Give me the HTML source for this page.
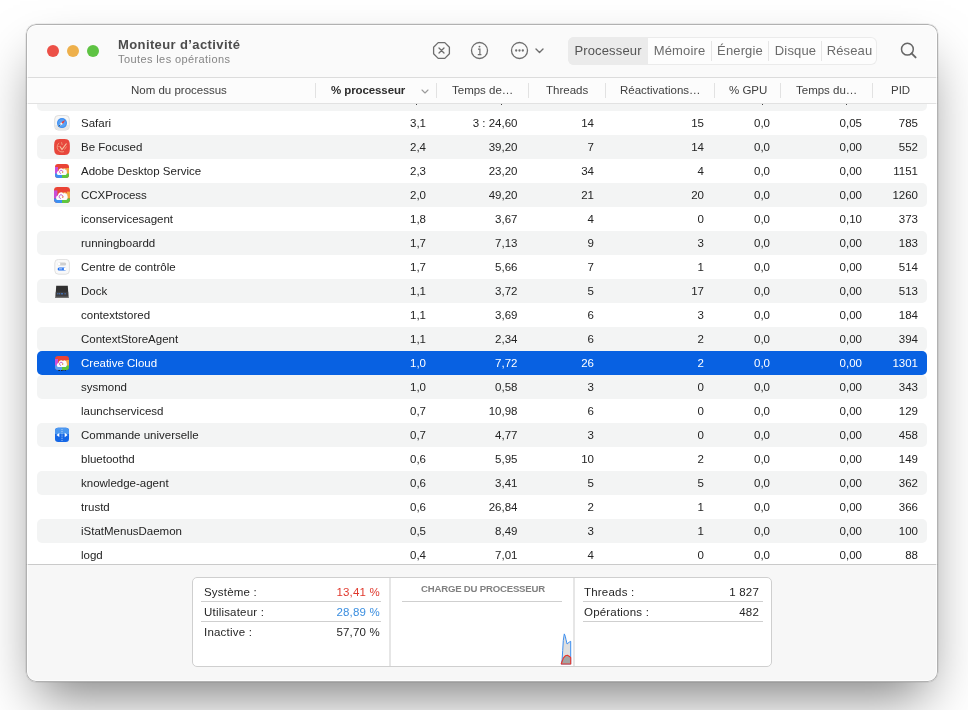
<!DOCTYPE html>
<html><head><meta charset="utf-8">
<style>
html,body{margin:0;padding:0;}
body{width:968px;height:710px;overflow:hidden;background:#fff;position:relative;font-family:"Liberation Sans",sans-serif;}
.win{will-change:transform;position:absolute;left:26px;top:24px;width:912px;height:658px;border-radius:10px;background:#f7f7f7;box-shadow:0 0 0 0.5px rgba(0,0,0,0.12),0 26px 50px -12px rgba(0,0,0,0.5);overflow:hidden;}
.wb{position:absolute;left:0;top:0;right:0;bottom:0;border-radius:10px;box-shadow:inset 0 0 0 1px rgba(0,0,0,0.3),inset 0 0 0 2px rgba(255,255,255,0.7);z-index:20;pointer-events:none;}
.title{position:absolute;left:0;top:0;width:912px;height:53px;background:#fafafa;border-bottom:1px solid #dcdcdc;z-index:3;}
.tl{position:absolute;top:21px;width:12px;height:12px;border-radius:50%;}
.ttl{position:absolute;left:92px;top:13px;font-size:13px;font-weight:bold;color:#4c4c4c;white-space:nowrap;letter-spacing:0.39px;}
.sub{position:absolute;left:92px;top:29px;font-size:11px;color:#858585;white-space:nowrap;letter-spacing:0.4px;}
.seg{position:absolute;left:542px;top:13px;width:309px;height:28px;border-radius:6px;background:#fdfdfd;box-shadow:inset 0 0 0 1px #ebebeb;overflow:hidden;}
.segi{position:absolute;top:0;height:28px;line-height:28px;font-size:13px;color:#6b6b6b;text-align:center;letter-spacing:0.15px;}
.segsep{position:absolute;top:4px;width:1px;height:20px;background:#e6e6e6;}
.hdr{position:absolute;left:0;top:54px;width:912px;height:25px;background:rgba(252,252,252,0.95);border-bottom:1px solid #e2e2e2;z-index:2;}
.hc{position:absolute;top:0;height:25px;line-height:25px;font-size:11.5px;color:#404040;white-space:nowrap;}
.hsep{position:absolute;top:5px;width:1px;height:15px;background:#e2e2e2;}
.table{position:absolute;left:0;top:54px;width:912px;height:486px;background:#fff;overflow:hidden;border-bottom:1px solid #cacaca;}
.row{position:absolute;left:11px;width:890px;height:24px;border-radius:5px;font-size:11.5px;color:#242424;}
.table .row{margin-top:-54px;}
.row.alt{background:#f3f4f4;}
.row.sel{background:#0861e2;color:#fff;}
.ic{position:absolute;left:17px;top:4px;width:16px;height:16px;}
.ic svg{display:block;}
.nm{position:absolute;left:44px;top:0;line-height:24px;white-space:nowrap;}
.c{position:absolute;top:0;line-height:24px;white-space:nowrap;text-align:right;}
.panel{position:absolute;left:166px;top:553px;width:578px;height:88px;background:#fff;border:1px solid #cfcfcf;border-radius:5px;}
.pl{position:absolute;font-size:11.5px;color:#262626;white-space:nowrap;letter-spacing:0.2px;}
.tb{position:absolute;left:0;top:0;width:912px;height:53px;z-index:4;}
.pline{position:absolute;height:1px;background:#cfcfcf;}
</style></head><body>
<div class="win"><div class="wb"></div>
 <div class="title">
  <div class="tl" style="left:21px;background:#ec5047;"></div>
  <div class="tl" style="left:41px;background:#eeb04b;"></div>
  <div class="tl" style="left:61px;background:#5ec343;"></div>
  <div class="ttl">Moniteur d’activité</div>
  <div class="sub">Toutes les opérations</div>
 </div>
 <div class="table">
 <div class="row alt" style="top:63px"></div><div style="position:absolute;left:390px;top:26px;width:1.4px;height:1.4px;background:#444;margin-top:0"></div><div style="position:absolute;left:475px;top:26px;width:1.4px;height:1.4px;background:#444;margin-top:0"></div><div style="position:absolute;left:736px;top:26px;width:1.4px;height:1.4px;background:#444;margin-top:0"></div><div style="position:absolute;left:820px;top:26px;width:1.4px;height:1.4px;background:#444;margin-top:0"></div>
 <div class="row" style="top:87px"><div class="ic"><svg width="16" height="16" viewBox="0 0 16 16"><rect x="0.7" y="0.5" width="14.6" height="14.6" rx="3.6" fill="#f7f7f7" stroke="#d2d2d2" stroke-width="0.7"/><path d="M1.2 10 H14.8 V11.5 Q14.8 14.8 11.5 14.8 H4.5 Q1.2 14.8 1.2 11.5Z" fill="#e6e6e6"/><circle cx="8" cy="8.1" r="5" fill="#3b8cf0"/><circle cx="8" cy="8.1" r="3.9" fill="#5aa2f5"/><path d="M11.2 4.9 L8.9 9 L7.1 7.2Z" fill="#f0382f"/><path d="M4.8 11.3 L7.1 7.2 L8.9 9Z" fill="#fafafa"/><path d="M4.8 11.3 L6.4 9.6" stroke="#333" stroke-width="0.8"/></svg></div><div class="nm">Safari</div><div class="c" style="right:501px">3,1</div><div class="c" style="right:409.5px">3 : 24,60</div><div class="c" style="right:333px">14</div><div class="c" style="right:223px">15</div><div class="c" style="right:157px">0,0</div><div class="c" style="right:65px">0,05</div><div class="c" style="right:9px">785</div></div>
<div class="row alt" style="top:111px"><div class="ic"><svg width="16" height="16" viewBox="0 0 16 16"><path d="M3.5 0.3 C6 -0.1 10 -0.1 12.5 0.3 C15.3 0.8 15.9 3 15.9 8 C15.9 13 15.3 15.2 12.5 15.7 C10 16.1 6 16.1 3.5 15.7 C0.7 15.2 0.1 13 0.1 8 C0.1 3 0.7 0.8 3.5 0.3Z" fill="#e8473c"/><path d="M5.2 4 C3.2 5.2 2.8 8 3.6 10 C4.5 12.4 7.5 13.6 10 12.6" fill="none" stroke="#f4b08e" stroke-width="0.8"/><path d="M6 7.5 L8 10.5 L12.5 4.5" fill="none" stroke="#f6c2a0" stroke-width="1.2"/><path d="M7.5 3.2 L8.2 6 M12.5 7.5 L10.5 10.5" stroke="#f2a082" stroke-width="0.8"/><circle cx="5" cy="7.5" r="0.6" fill="#f4b08e"/></svg></div><div class="nm">Be Focused</div><div class="c" style="right:501px">2,4</div><div class="c" style="right:409.5px">39,20</div><div class="c" style="right:333px">7</div><div class="c" style="right:223px">14</div><div class="c" style="right:157px">0,0</div><div class="c" style="right:65px">0,00</div><div class="c" style="right:9px">552</div></div>
<div class="row" style="top:135px"><div class="ic"><svg width="16" height="16" viewBox="0 0 16 16"><defs><clipPath id="ccc"><rect x="1" y="1" width="14" height="14" rx="3"/></clipPath></defs><g clip-path="url(#ccc)"><rect x="1" y="1" width="14" height="14" fill="#ea4335"/><rect x="1" y="4" width="3" height="7" fill="#c84ed8"/><rect x="12.2" y="5" width="2.8" height="6" fill="#f3a942"/><rect x="1" y="10.5" width="7" height="4.5" fill="#3d8ff2"/><rect x="8" y="10.5" width="7" height="4.5" fill="#5ec63e"/><path d="M4.3 12 C2.4 12 2.3 8.2 4.5 8 C4.6 5.3 7.8 4.4 9 6 C9.8 4.8 13 5.2 12.6 8 C13.3 9.3 13 12 11.2 12Z" fill="#fbfbfb"/><path d="M7 10.5 C5.2 10.5 5 7.5 7 7.3 C8.6 7.2 9.6 9 8.3 9.8" fill="none" stroke="#c050c8" stroke-width="0.9"/><circle cx="8.6" cy="9.3" r="0.7" fill="#f3a942"/><path d="M9 6 C10 5.2 12 5.5 12 7" fill="none" stroke="#f0a030" stroke-width="0.7"/></g></svg></div><div class="nm">Adobe Desktop Service</div><div class="c" style="right:501px">2,3</div><div class="c" style="right:409.5px">23,20</div><div class="c" style="right:333px">34</div><div class="c" style="right:223px">4</div><div class="c" style="right:157px">0,0</div><div class="c" style="right:65px">0,00</div><div class="c" style="right:9px">1151</div></div>
<div class="row alt" style="top:159px"><div class="ic"><svg width="16" height="16" viewBox="0 0 16 16"><defs><clipPath id="cce"><rect x="0" y="0" width="16" height="16" rx="3.4"/></clipPath></defs><g clip-path="url(#cce)"><rect x="0" y="0" width="16" height="16" fill="#ea4335"/><rect x="0" y="3.4" width="3.4" height="8" fill="#c84ed8"/><rect x="12.8" y="4.6" width="3.2" height="6.8" fill="#f3a942"/><rect x="0" y="11.4" width="8" height="4.6" fill="#3d8ff2"/><rect x="8" y="11.4" width="8" height="4.6" fill="#5ec63e"/><path d="M3.8 13 C1.6 13 1.5 8.6 4 8.4 C4.1 5.3 7.8 4.3 9.1 6.1 C10 4.8 13.7 5.2 13.3 8.4 C14.1 9.9 13.8 13 11.7 13Z" fill="#fbfbfb"/><path d="M6.8 11.5 C4.8 11.5 4.5 8.1 6.8 7.8 C8.6 7.7 9.8 9.8 8.3 10.7" fill="none" stroke="#c050c8" stroke-width="1"/><circle cx="8.8" cy="10.1" r="0.8" fill="#f3a942"/><path d="M9.1 6.1 C10.2 5.2 12.5 5.6 12.5 7.2" fill="none" stroke="#f0a030" stroke-width="0.8"/></g></svg></div><div class="nm">CCXProcess</div><div class="c" style="right:501px">2,0</div><div class="c" style="right:409.5px">49,20</div><div class="c" style="right:333px">21</div><div class="c" style="right:223px">20</div><div class="c" style="right:157px">0,0</div><div class="c" style="right:65px">0,00</div><div class="c" style="right:9px">1260</div></div>
<div class="row" style="top:183px"><div class="nm">iconservicesagent</div><div class="c" style="right:501px">1,8</div><div class="c" style="right:409.5px">3,67</div><div class="c" style="right:333px">4</div><div class="c" style="right:223px">0</div><div class="c" style="right:157px">0,0</div><div class="c" style="right:65px">0,10</div><div class="c" style="right:9px">373</div></div>
<div class="row alt" style="top:207px"><div class="nm">runningboardd</div><div class="c" style="right:501px">1,7</div><div class="c" style="right:409.5px">7,13</div><div class="c" style="right:333px">9</div><div class="c" style="right:223px">3</div><div class="c" style="right:157px">0,0</div><div class="c" style="right:65px">0,00</div><div class="c" style="right:9px">183</div></div>
<div class="row" style="top:231px"><div class="ic"><svg width="16" height="16" viewBox="0 0 16 16"><rect x="0.8" y="0.4" width="14.6" height="14.8" rx="3.6" fill="#f9f9f9" stroke="#d4d4d4" stroke-width="0.7"/><rect x="3.6" y="3.4" width="8.6" height="3" rx="1.5" fill="#cfcfcf"/><circle cx="5" cy="4.9" r="1.3" fill="#fff"/><rect x="3.6" y="8.4" width="8.6" height="3" rx="1.5" fill="#1f6ff0"/><circle cx="11" cy="9.9" r="1.3" fill="#fff"/><path d="M5 9.9 H8.3" stroke="#fff" stroke-width="0.8"/></svg></div><div class="nm">Centre de contrôle</div><div class="c" style="right:501px">1,7</div><div class="c" style="right:409.5px">5,66</div><div class="c" style="right:333px">7</div><div class="c" style="right:223px">1</div><div class="c" style="right:157px">0,0</div><div class="c" style="right:65px">0,00</div><div class="c" style="right:9px">514</div></div>
<div class="row alt" style="top:255px"><div class="ic"><svg width="16" height="16" viewBox="0 0 16 16"><path d="M2.2 2.8 H13.8 L14.6 14.9 H1.4Z" fill="#303030"/><rect x="1.8" y="8.8" width="12.4" height="4.4" fill="#3e3e40"/><path d="M3.3 10.8 H4.4 M5.1 10.8 H6.2 M7 10.8 H9 M10.6 10.8 H11.7" stroke="#4a8cf0" stroke-width="0.9"/><rect x="1.4" y="13.6" width="13.2" height="1.3" fill="#7a7a7a"/></svg></div><div class="nm">Dock</div><div class="c" style="right:501px">1,1</div><div class="c" style="right:409.5px">3,72</div><div class="c" style="right:333px">5</div><div class="c" style="right:223px">17</div><div class="c" style="right:157px">0,0</div><div class="c" style="right:65px">0,00</div><div class="c" style="right:9px">513</div></div>
<div class="row" style="top:279px"><div class="nm">contextstored</div><div class="c" style="right:501px">1,1</div><div class="c" style="right:409.5px">3,69</div><div class="c" style="right:333px">6</div><div class="c" style="right:223px">3</div><div class="c" style="right:157px">0,0</div><div class="c" style="right:65px">0,00</div><div class="c" style="right:9px">184</div></div>
<div class="row alt" style="top:303px"><div class="nm">ContextStoreAgent</div><div class="c" style="right:501px">1,1</div><div class="c" style="right:409.5px">2,34</div><div class="c" style="right:333px">6</div><div class="c" style="right:223px">2</div><div class="c" style="right:157px">0,0</div><div class="c" style="right:65px">0,00</div><div class="c" style="right:9px">394</div></div>
<div class="row sel" style="top:327px"><div class="ic"><svg width="16" height="16" viewBox="0 0 16 16"><defs><clipPath id="ccd"><rect x="1" y="1" width="14" height="14" rx="3"/></clipPath></defs><g clip-path="url(#ccd)"><rect x="1" y="1" width="14" height="14" fill="#ea4335"/><rect x="1" y="4" width="3" height="7" fill="#c84ed8"/><rect x="12.2" y="5" width="2.8" height="6" fill="#f3a942"/><rect x="1" y="10.5" width="7" height="4.5" fill="#5aa0f0"/><rect x="8" y="10.5" width="7" height="4.5" fill="#5ec63e"/><path d="M4.3 12 C2.4 12 2.3 8.2 4.5 8 C4.6 5.3 7.8 4.4 9 6 C9.8 4.8 13 5.2 12.6 8 C13.3 9.3 13 12 11.2 12Z" fill="#fbfbfb"/><path d="M7 10.5 C5.2 10.5 5 7.5 7 7.3 C8.6 7.2 9.6 9 8.3 9.8" fill="none" stroke="#c050c8" stroke-width="0.9"/><circle cx="8.6" cy="9.3" r="0.7" fill="#f3a942"/></g><path d="M4.3 15.5 H6 M7 15.5 H8.6 M9.6 15.5 H10.3 M11.3 15.5 H12" stroke="#222" stroke-width="1"/></svg></div><div class="nm">Creative Cloud</div><div class="c" style="right:501px">1,0</div><div class="c" style="right:409.5px">7,72</div><div class="c" style="right:333px">26</div><div class="c" style="right:223px">2</div><div class="c" style="right:157px">0,0</div><div class="c" style="right:65px">0,00</div><div class="c" style="right:9px">1301</div></div>
<div class="row alt" style="top:351px"><div class="nm">sysmond</div><div class="c" style="right:501px">1,0</div><div class="c" style="right:409.5px">0,58</div><div class="c" style="right:333px">3</div><div class="c" style="right:223px">0</div><div class="c" style="right:157px">0,0</div><div class="c" style="right:65px">0,00</div><div class="c" style="right:9px">343</div></div>
<div class="row" style="top:375px"><div class="nm">launchservicesd</div><div class="c" style="right:501px">0,7</div><div class="c" style="right:409.5px">10,98</div><div class="c" style="right:333px">6</div><div class="c" style="right:223px">0</div><div class="c" style="right:157px">0,0</div><div class="c" style="right:65px">0,00</div><div class="c" style="right:9px">129</div></div>
<div class="row alt" style="top:399px"><div class="ic"><svg width="16" height="16" viewBox="0 0 16 16"><rect x="1" y="0.8" width="14" height="14.2" rx="3.2" fill="#1567e6"/><path d="M1 7 V4 Q1 0.8 4.2 0.8 H11.8 Q15 0.8 15 4 V7Z" fill="#4c98f0"/><path d="M2.4 8 L5.3 6 V10Z" fill="#fff"/><path d="M13.6 8 L10.7 5.8 V10.2Z" fill="#fff"/><path d="M8 2.2 V14" stroke="#dfe8f4" stroke-width="0.8" stroke-dasharray="0.9 0.9"/></svg></div><div class="nm">Commande universelle</div><div class="c" style="right:501px">0,7</div><div class="c" style="right:409.5px">4,77</div><div class="c" style="right:333px">3</div><div class="c" style="right:223px">0</div><div class="c" style="right:157px">0,0</div><div class="c" style="right:65px">0,00</div><div class="c" style="right:9px">458</div></div>
<div class="row" style="top:423px"><div class="nm">bluetoothd</div><div class="c" style="right:501px">0,6</div><div class="c" style="right:409.5px">5,95</div><div class="c" style="right:333px">10</div><div class="c" style="right:223px">2</div><div class="c" style="right:157px">0,0</div><div class="c" style="right:65px">0,00</div><div class="c" style="right:9px">149</div></div>
<div class="row alt" style="top:447px"><div class="nm">knowledge-agent</div><div class="c" style="right:501px">0,6</div><div class="c" style="right:409.5px">3,41</div><div class="c" style="right:333px">5</div><div class="c" style="right:223px">5</div><div class="c" style="right:157px">0,0</div><div class="c" style="right:65px">0,00</div><div class="c" style="right:9px">362</div></div>
<div class="row" style="top:471px"><div class="nm">trustd</div><div class="c" style="right:501px">0,6</div><div class="c" style="right:409.5px">26,84</div><div class="c" style="right:333px">2</div><div class="c" style="right:223px">1</div><div class="c" style="right:157px">0,0</div><div class="c" style="right:65px">0,00</div><div class="c" style="right:9px">366</div></div>
<div class="row alt" style="top:495px"><div class="nm">iStatMenusDaemon</div><div class="c" style="right:501px">0,5</div><div class="c" style="right:409.5px">8,49</div><div class="c" style="right:333px">3</div><div class="c" style="right:223px">1</div><div class="c" style="right:157px">0,0</div><div class="c" style="right:65px">0,00</div><div class="c" style="right:9px">100</div></div>
<div class="row" style="top:519px"><div class="nm">logd</div><div class="c" style="right:501px">0,4</div><div class="c" style="right:409.5px">7,01</div><div class="c" style="right:333px">4</div><div class="c" style="right:223px">0</div><div class="c" style="right:157px">0,0</div><div class="c" style="right:65px">0,00</div><div class="c" style="right:9px">88</div></div>
 </div>
 <div class="hdr">
  <div class="hc" style="left:105px">Nom du processus</div>
  <div class="hsep" style="left:289px"></div>
  <div class="hc" style="left:305px;font-weight:bold;color:#2e2e2e;letter-spacing:-0.1px">% processeur</div>
  <svg style="position:absolute;left:395px;top:11px" width="8" height="5" viewBox="0 0 8 5"><path d="M1 1 L4 4 L7 1" fill="none" stroke="#9a9a9a" stroke-width="1.1" stroke-linecap="round" stroke-linejoin="round"/></svg>
  <div class="hsep" style="left:410px"></div>
  <div class="hc" style="left:426px">Temps de…</div>
  <div class="hsep" style="left:502px"></div>
  <div class="hc" style="left:520px">Threads</div>
  <div class="hsep" style="left:579px"></div>
  <div class="hc" style="left:594px">Réactivations…</div>
  <div class="hsep" style="left:688px"></div>
  <div class="hc" style="left:703px">% GPU</div>
  <div class="hsep" style="left:754px"></div>
  <div class="hc" style="left:770px">Temps du…</div>
  <div class="hsep" style="left:846px"></div>
  <div class="hc" style="left:865px">PID</div>
 </div>
 <div class="tb">
  <svg style="position:absolute;left:406px;top:17px" width="19" height="19" viewBox="0 0 19 19"><path d="M6.2 1.6 H12.8 L17.4 6.2 V12.8 L12.8 17.4 H6.2 L1.6 12.8 V6.2Z" fill="none" stroke="#6e6e6e" stroke-width="1.3" stroke-linejoin="round"/><path d="M7 7 L12 12 M12 7 L7 12" stroke="#6e6e6e" stroke-width="1.3" stroke-linecap="round"/></svg>
  <svg style="position:absolute;left:444px;top:17px" width="19" height="19" viewBox="0 0 19 19"><circle cx="9.5" cy="9.5" r="8" fill="none" stroke="#6e6e6e" stroke-width="1.3"/><circle cx="9.5" cy="5.6" r="0.95" fill="#6e6e6e"/><path d="M8 8.2 H9.9 V13.6 M7.8 13.6 H11.4" fill="none" stroke="#6e6e6e" stroke-width="1.2"/></svg>
  <svg style="position:absolute;left:484px;top:17px" width="19" height="19" viewBox="0 0 19 19"><circle cx="9.5" cy="9.5" r="8" fill="none" stroke="#6e6e6e" stroke-width="1.3"/><circle cx="6.2" cy="9.5" r="1.15" fill="#6e6e6e"/><circle cx="9.5" cy="9.5" r="1.15" fill="#6e6e6e"/><circle cx="12.8" cy="9.5" r="1.15" fill="#6e6e6e"/></svg>
  <svg style="position:absolute;left:509px;top:24px" width="9" height="6" viewBox="0 0 9 6"><path d="M1 1 L4.5 4.5 L8 1" fill="none" stroke="#6e6e6e" stroke-width="1.4" stroke-linecap="round" stroke-linejoin="round"/></svg>
  <div class="seg">
   <div style="position:absolute;left:0;top:0;width:80px;height:28px;background:#ebebeb;"></div>
   <div class="segi" style="left:0;width:80px;color:#555">Processeur</div>
   <div class="segi" style="left:80px;width:63px">Mémoire</div>
   <div class="segsep" style="left:143px"></div>
   <div class="segi" style="left:144px;width:56px">Énergie</div>
   <div class="segsep" style="left:200px"></div>
   <div class="segi" style="left:201px;width:53px">Disque</div>
   <div class="segsep" style="left:253px"></div>
   <div class="segi" style="left:254px;width:55px">Réseau</div>
  </div>
  <svg style="position:absolute;left:874px;top:18px" width="18" height="18" viewBox="0 0 18 18"><circle cx="7.4" cy="7.2" r="5.9" fill="none" stroke="#666" stroke-width="1.5"/><path d="M11.6 11.4 L15.6 15.4" stroke="#666" stroke-width="1.9" stroke-linecap="round"/></svg>
 </div>
 <div class="panel">
  <div class="pl" style="left:11px;top:8px">Système :</div>
  <div class="pl" style="right:391px;top:8px;color:#e0382c">13,41 %</div>
  <div class="pline" style="left:8px;top:23px;width:180px"></div>
  <div class="pl" style="left:11px;top:28px">Utilisateur :</div>
  <div class="pl" style="right:391px;top:28px;color:#3a8ee0">28,89 %</div>
  <div class="pline" style="left:8px;top:43px;width:180px"></div>
  <div class="pl" style="left:11px;top:48px">Inactive :</div>
  <div class="pl" style="right:391px;top:48px">57,70 %</div>
  <div style="position:absolute;left:196px;top:0;width:2px;height:88px;background:#e6e6e6"></div>
  <div style="position:absolute;left:228px;top:5px;font-size:9.6px;font-weight:bold;color:#808080;white-space:nowrap;letter-spacing:-0.2px">CHARGE DU PROCESSEUR</div>
  <div class="pline" style="left:209px;top:23px;width:160px"></div>
  <svg style="position:absolute;left:362px;top:50px" width="25" height="42" viewBox="0 0 25 42"><path d="M6.2 36 L6.4 35.2 L7.1 31.9 L7.7 22.5 L8.3 12.4 L9.3 5.9 L10.3 8.3 L10.9 11.2 L12.1 16 L14.2 14.2 L15.7 13.3 L15.7 36Z" fill="#dedede" stroke="#3d8ff0" stroke-width="1" stroke-linejoin="round"/><path d="M6.4 35.5 L8.3 30.1 L10.3 27.8 L12.4 27.2 L14.5 28.4 L15.7 29.6 L15.7 36 L6.4 36Z" fill="#a3a3a3" stroke="#e8352b" stroke-width="1.1" stroke-linejoin="round"/></svg>
  <div style="position:absolute;left:380px;top:0;width:2px;height:88px;background:#e6e6e6"></div>
  <div class="pl" style="left:391px;top:8px">Threads :</div>
  <div class="pl" style="right:12px;top:8px">1 827</div>
  <div class="pline" style="left:390px;top:23px;width:180px"></div>
  <div class="pl" style="left:391px;top:28px">Opérations :</div>
  <div class="pl" style="right:12px;top:28px">482</div>
  <div class="pline" style="left:390px;top:43px;width:180px"></div>
 </div>
</div>
</body></html>
